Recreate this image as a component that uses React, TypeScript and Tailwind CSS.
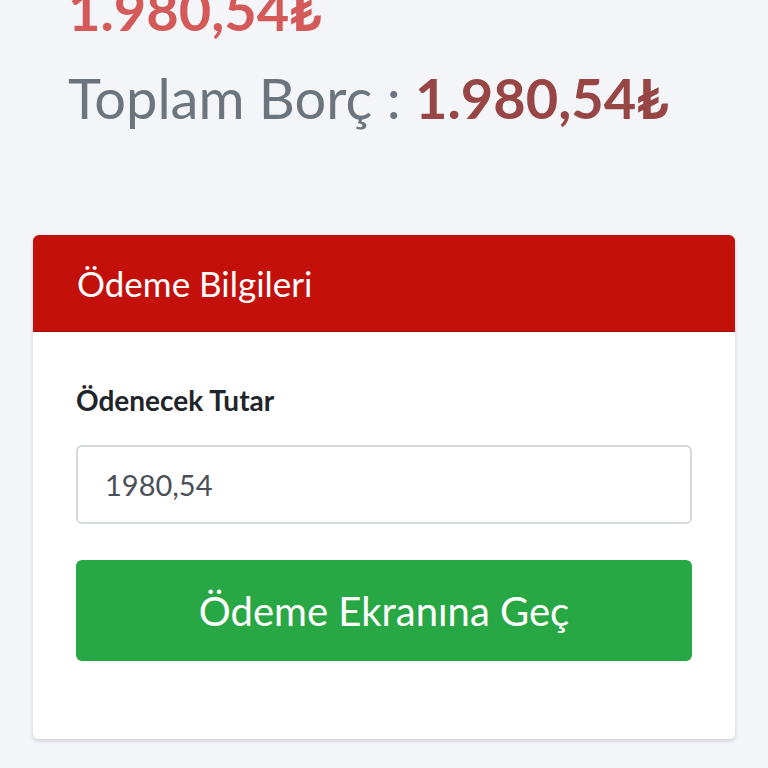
export default function App() {
  return (
    <div className="min-h-screen overflow-hidden bg-[#f4f5f8] px-[33px] font-['Lato','Noto_Sans',sans-serif]">
      <div className="mt-[-34px] px-[35px]">
        <div className="text-[56px] font-bold leading-[88px] text-[#d45a5a]">1.980,54₺</div>
        <div className="whitespace-nowrap text-[56px] leading-[88px] text-[#6c757d]">
          Toplam Borç : <span className="font-bold text-[#974545]">1.980,54₺</span>
        </div>
      </div>

      <div className="mt-[93px] overflow-hidden rounded-md bg-white shadow-[0_2px_4px_rgba(0,0,0,0.15)]">
        <div className="flex h-[97px] items-center border-b border-[#9e0d08] bg-[#c4100a] px-[44px] text-[35px] text-white">
          Ödeme Bilgileri
        </div>
        <div className="px-[43px] pt-[48px] pb-[78px]">
          <label className="block text-[28px] font-bold leading-[40px] text-[#212529]">Ödenecek Tutar</label>
          <input
            defaultValue="1980,54"
            className="mt-[25px] block h-[79px] w-full rounded-md border-2 border-[#d5d8dc] px-[27px] text-[29px] text-[#495057] outline-none"
          />
          <button className="mt-[36px] flex h-[101px] w-full items-center justify-center rounded-md bg-[#28a745] text-[40px] text-white">
            Ödeme Ekranına Geç
          </button>
        </div>
      </div>
    </div>
  );
}
